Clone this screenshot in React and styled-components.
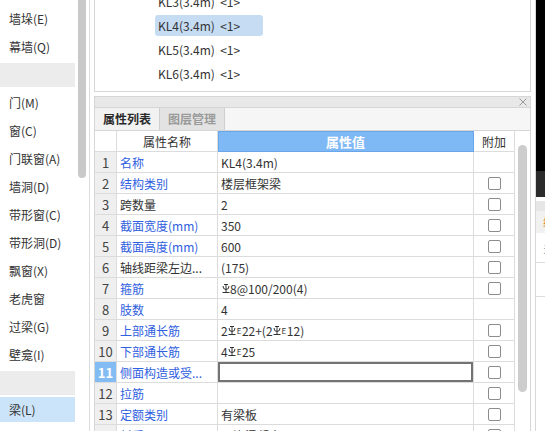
import React from "react";
import styled, { createGlobalStyle } from "styled-components";

const GlobalStyle = createGlobalStyle`
  html, body {
    margin: 0;
    padding: 0;
    background: #fff;
  }
  body {
    width: 545px;
    height: 431px;
    overflow: hidden;
    font-family: "Noto Sans CJK SC", "Noto Sans", sans-serif;
    font-size: 12px;
    color: #333;
  }
  * { box-sizing: border-box; }
`;

const Page = styled.div`
  display: flex;
  width: 545px;
  height: 431px;
  overflow: hidden;
  background: #fff;
`;

// ---- left component list ----
const Sidebar = styled.div`
  width: 75px;
  flex: none;
  padding-top: 5px;
`;

const SideItem = styled.div`
  height: ${(p) => (p.$active ? "25px" : "28px")};
  line-height: ${(p) => (p.$active ? "25px" : "28px")};
  margin-top: ${(p) => (p.$active ? "2px" : "0")};
  padding-left: 9px;
  white-space: nowrap;
  color: #333;
  background: ${(p) => (p.$active ? "#cce4f9" : "transparent")};
`;

const SideBand = styled.div`
  height: 24px;
  margin: 2px 0;
  background: #ececec;
`;

const SideScroll = styled.div`
  width: 8px;
  margin-left: 3px;
  flex: none;
`;

const SideThumb = styled.div`
  height: 178px;
  background: #c9c9c9;
  border-radius: 0 0 4px 4px;
`;

const Divider = styled.div`
  width: 1px;
  margin: 0 4px 0 3px;
  background: #dcdcdc;
  flex: none;
`;

// ---- main area ----
const Main = styled.div`
  width: 437px;
  flex: none;
  display: flex;
  flex-direction: column;
`;

const ListPanel = styled.div`
  height: 92px;
  flex: none;
  border: 1px solid #d6d6d6;
  border-top: none;
  overflow: hidden;
`;

const ListInner = styled.div`
  margin-top: -11px;
`;

const ListRow = styled.div`
  height: 24px;
  display: flex;
  align-items: center;
  padding-left: 60px;
`;

const ListLabel = styled.span`
  display: inline-block;
  width: 108px;
  height: 21px;
  line-height: 21px;
  padding: 0 3px;
  border-radius: 3px;
  white-space: pre;
  color: #333;
  background: ${(p) => (p.$active ? "#c5dcf3" : "transparent")};
`;

const PropPanel = styled.div`
  margin-top: 4px;
  flex: 1;
  display: flex;
  flex-direction: column;
  border-left: 1px solid #d6d6d6;
  border-right: 1px solid #d6d6d6;
  min-height: 0;
`;

const TitleBar = styled.div`
  height: 12px;
  margin: 0 -1px;
  background: #e8e8e8;
  border: 1px solid #d6d6d6;
  display: flex;
  justify-content: flex-end;
  align-items: center;
  padding-right: 3px;
`;

const TabRow = styled.div`
  height: 23px;
  display: flex;
  background: #f6f6f6;
  border-bottom: 1px solid #d6d6d6;
`;

const Tab = styled.div`
  width: 65px;
  height: 22px;
  line-height: 22px;
  text-align: center;
  font-weight: bold;
  color: ${(p) => (p.$active ? "#2a2a2a" : "#9a9a9a")};
  background: ${(p) => (p.$active ? "#f2f2f2" : "#e3e3e3")};
  border-right: 1px solid #cfcfcf;
`;

const TableArea = styled.div`
  display: flex;
  flex: 1;
  min-height: 0;
  overflow: hidden;
`;

const Grid = styled.div`
  width: 420px;
  flex: none;
  display: grid;
  grid-template-columns: 22px 101px 256px 41px;
  grid-auto-rows: 21px;
  align-content: start;
`;

const Cell = styled.div`
  border-right: 1px solid #dcdcdc;
  border-bottom: 1px solid #dcdcdc;
  display: flex;
  align-items: center;
  justify-content: ${(p) => (p.$center ? "center" : "flex-start")};
  padding-left: ${(p) => (p.$center ? "0" : "3px")};
  white-space: nowrap;
  overflow: hidden;
  color: ${(p) => (p.$blue ? "#2f60e0" : "#333")};
  background: #fff;
`;

const NumCell = styled(Cell)`
  justify-content: center;
  padding-left: 0;
  font-size: 13px;
  font-weight: ${(p) => (p.$sel ? "bold" : "normal")};
  color: ${(p) => (p.$sel ? "#fff" : "#444")};
  background: ${(p) => (p.$sel ? "#83bcf3" : "#efefef")};
`;

const HeadCell = styled(Cell)`
  justify-content: center;
  padding-left: 0;
  background: ${(p) => (p.$accent ? "#7fb9f5" : "#fff")};
  color: ${(p) => (p.$accent ? "#fff" : "#333")};
  font-weight: ${(p) => (p.$accent ? "bold" : "normal")};
  font-size: ${(p) => (p.$accent ? "13px" : "12px")};
  border-color: ${(p) => (p.$accent ? "#6aa6ea" : "#dcdcdc")};
  box-shadow: ${(p) => (p.$accent ? "inset 1px 1px 0 #6aa6ea" : "none")};
`;

const EditCell = styled(Cell)`
  box-shadow: inset 0 0 0 2px #737373;
`;

const CheckBox = styled.span`
  width: 13px;
  height: 13px;
  border: 1px solid #8c8c8c;
  border-radius: 2px;
  background: #fff;
`;

const ScrollTrack = styled.div`
  flex: 1;
  padding: 14px 0 0 3px;
`;

const ScrollThumb = styled.div`
  width: 9px;
  height: 247px;
  border-radius: 5px;
  background: #cdcdcd;
`;

const RebarSvg = styled.svg`
  vertical-align: 1px;
  margin: 0 0.5px;
`;

const Sup = styled.span`
  font-size: 8px;
  vertical-align: 5px;
  margin-right: 0.5px;
`;

// ---- right edge strip ----
const Strip = styled.div`
  width: 10px;
  margin-left: 4px;
  flex: none;
  border-left: 1px solid #d8d8d8;
  display: flex;
  flex-direction: column;
  overflow: hidden;
`;

const StripBlock = styled.div`
  height: ${(p) => p.$h}px;
  flex: none;
  background: ${(p) => p.$bg || "#fff"};
  border-bottom: ${(p) => (p.$line ? "1px solid #dcdcdc" : "none")};
  color: ${(p) => p.$color || "#333"};
  padding-left: 7px;
  line-height: ${(p) => p.$h}px;
  white-space: nowrap;
`;

const Rebar = () => (
  <RebarSvg width="8" height="9" viewBox="0 0 8 9">
    <path
      d="M4 0.5V8.5 M1 2 Q1 5.5 4 5.5 Q7 5.5 7 2 M0.5 8.5H7.5 M2 0.5H6"
      stroke="#333"
      strokeWidth="1"
      fill="none"
    />
  </RebarSvg>
);

const CloseIcon = () => (
  <svg width="8" height="8" viewBox="0 0 8 8">
    <path d="M0.5 0.5L7.5 7.5M7.5 0.5L0.5 7.5" stroke="#9a9a9a" strokeWidth="1" />
  </svg>
);

const sideItems = [
  "墙垛(E)",
  "幕墙(Q)",
  null,
  "门(M)",
  "窗(C)",
  "门联窗(A)",
  "墙洞(D)",
  "带形窗(C)",
  "带形洞(D)",
  "飘窗(X)",
  "老虎窗",
  "过梁(G)",
  "壁龛(I)",
  null,
];

const beams = ["KL3", "KL4", "KL5", "KL6"];

const rows = [
  { name: "名称", blue: true, value: "KL4(3.4m)", check: false },
  { name: "结构类别", blue: true, value: "楼层框架梁", check: true },
  { name: "跨数量", value: "2", check: true },
  { name: "截面宽度(mm)", blue: true, value: "350", check: true },
  { name: "截面高度(mm)", blue: true, value: "600", check: true },
  { name: "轴线距梁左边...", value: "(175)", check: true },
  {
    name: "箍筋",
    blue: true,
    value: (
      <>
        <Rebar />8@100/200(4)
      </>
    ),
    check: true,
  },
  { name: "肢数", blue: true, value: "4", check: false },
  {
    name: "上部通长筋",
    blue: true,
    value: (
      <>
        2<Rebar />
        <Sup>E</Sup>22+(2<Rebar />
        <Sup>E</Sup>12)
      </>
    ),
    check: true,
  },
  {
    name: "下部通长筋",
    blue: true,
    value: (
      <>
        4<Rebar />
        <Sup>E</Sup>25
      </>
    ),
    check: true,
  },
  { name: "侧面构造或受...", blue: true, value: "", check: true, editing: true },
  { name: "拉筋", blue: true, value: "", check: true },
  { name: "定额类别", blue: true, value: "有梁板", check: true },
  { name: "材质", blue: true, value: "现浇混凝土", check: true },
];

function App() {
  return (
    <>
      <GlobalStyle />
      <Page>
        <Sidebar>
          {sideItems.map((item, i) =>
            item ? <SideItem key={i}>{item}</SideItem> : <SideBand key={i} />
          )}
          <SideItem $active>梁(L)</SideItem>
        </Sidebar>
        <SideScroll>
          <SideThumb />
        </SideScroll>
        <Divider />

        <Main>
          <ListPanel>
            <ListInner>
              {beams.map((b) => (
                <ListRow key={b}>
                  <ListLabel $active={b === "KL4"}>{b + "(3.4m)  <1>"}</ListLabel>
                </ListRow>
              ))}
            </ListInner>
          </ListPanel>

          <PropPanel>
            <TitleBar>
              <CloseIcon />
            </TitleBar>
            <TabRow>
              <Tab $active>属性列表</Tab>
              <Tab>图层管理</Tab>
            </TabRow>
            <TableArea>
              <Grid>
                <HeadCell />
                <HeadCell>属性名称</HeadCell>
                <HeadCell $accent>属性值</HeadCell>
                <HeadCell>附加</HeadCell>
                {rows.map((r, i) => {
                  const ValueCell = r.editing ? EditCell : Cell;
                  return (
                    <React.Fragment key={i}>
                      <NumCell $sel={r.editing}>{i + 1}</NumCell>
                      <Cell $blue={r.blue}>{r.name}</Cell>
                      <ValueCell>{r.value}</ValueCell>
                      <Cell $center>{r.check && <CheckBox />}</Cell>
                    </React.Fragment>
                  );
                })}
              </Grid>
              <ScrollTrack>
                <ScrollThumb />
              </ScrollTrack>
            </TableArea>
          </PropPanel>
        </Main>

        <Strip>
          <StripBlock $h={171} $bg="#000" />
          <StripBlock $h={26} $bg="#2b2b2b" />
          <StripBlock $h={4} />
          <StripBlock $h={10} $bg="#e6e6e6" />
          <StripBlock $h={22} $bg="#f1f1f1" $color="#e08a2c">
            编
          </StripBlock>
          <StripBlock $h={30} $line $color="#7a8fb0">
            多
          </StripBlock>
          <StripBlock $h={34} $line />
        </Strip>
      </Page>
    </>
  );
}

export default App;
